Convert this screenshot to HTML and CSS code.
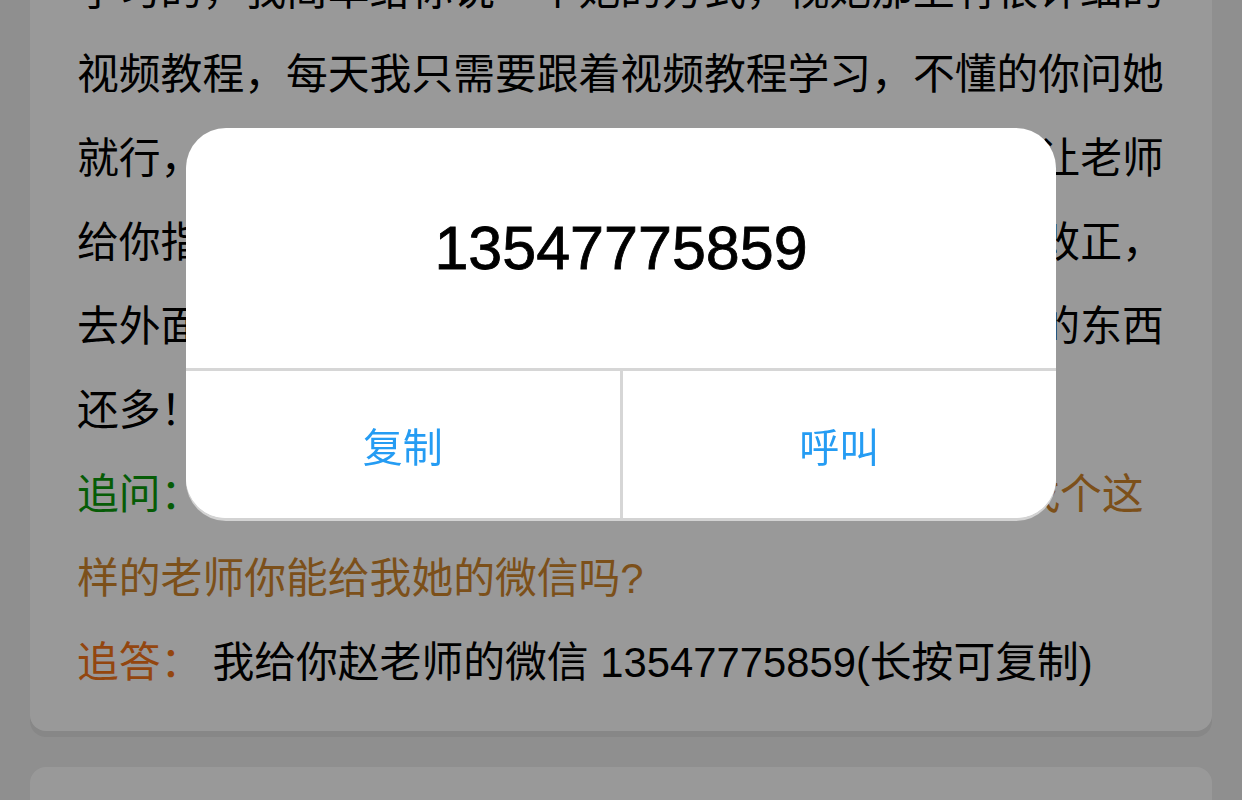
FILE: index.html
```html
<!DOCTYPE html>
<html lang="zh-CN">
<head>
  <meta charset="UTF-8">
  <meta name="viewport" content="width=device-width, initial-scale=1.0">
  <title>问答详情</title>
  <link rel="stylesheet" href="styles.css">
</head>
<body>
  <div class="page">
    <div class="card">
      <p class="answer">学习的，我简单给你说一个她的方式，视她那上有很详细的视频教程，每天我只需要跟着视频教程学习，不懂的你问她就行，她会很耐心的给你讲解，不会的也都可以直接让老师给你指导，哪里不对的地方老师都会帮你指出来让你改正，去外面报班花了好几千块钱学到的都没有在这里学到的东西还多！</p>
      <p class="ask"><span class="ask-label">追问：</span><span class="ask-text">谢谢你的回答,我也非常想学这个，我也想要找个这样的老师你能给我她的微信吗?</span></p>
      <p class="reply"><span class="reply-label">追答：</span><span class="reply-text">我给你赵老师的微信 13547775859(长按可复制)</span></p>
    </div>
    <div class="card"></div>
  </div>

  <div class="mask">
    <div class="dialog">
      <div class="dialog-number">13547775859</div>
      <div class="dialog-actions">
        <button class="dialog-btn" type="button">复制</button>
        <button class="dialog-btn" type="button">呼叫</button>
      </div>
    </div>
  </div>
</body>
</html>
```

FILE: styles.css
```css
body {
  margin: 0;
  font-family: "Liberation Sans", "Noto Sans CJK SC", sans-serif;
  background: #eeeeee;
  color: #000;
  overflow: hidden;
}
.page {
  margin-top: -71px;
  padding: 0 30px;
}
.card {
  background: #fff;
  border-radius: 16px;
  box-shadow: 0 6px 0 #e1e1e1;
  padding: 20px 45px 26px 47px;
  margin-bottom: 36px;
  font-size: 41.8px;
  line-height: 84px;
  min-height: 200px;
}
.card p {
  margin: 0;
}
.ask-label {
  color: #0a9a0a;
}
.ask-text {
  color: #cf852c;
  margin-left: 10px;
}
.reply-label {
  color: #f57519;
}
.reply-text {
  margin-left: 10px;
}

/* 弹窗 */
.mask {
  position: fixed;
  inset: 0;
  background: rgba(0, 0, 0, 0.4);
  display: flex;
  justify-content: center;
  align-items: flex-start;
  padding-top: 128px;
}
.dialog {
  width: 870px;
  background: #fff;
  border-radius: 40px;
  box-shadow: 0 3px 0 #d3d3d3;
  overflow: hidden;
}
.dialog-number {
  height: 240px;
  display: flex;
  align-items: center;
  justify-content: center;
  font-family: "Liberation Sans", Arial, sans-serif;
  font-size: 61px;
  color: #000;
  -webkit-text-stroke: 0.8px #000;
  border-bottom: 3px solid #d6d6d6;
}
.dialog-actions {
  display: flex;
  height: 147px;
}
.dialog-btn {
  flex: 1;
  border: none;
  background: #fff;
  padding: 0;
  font-family: "Noto Sans CJK SC", sans-serif;
  font-size: 40px;
  color: #259cf3;
  cursor: pointer;
}
.dialog-btn + .dialog-btn {
  border-left: 3px solid #d6d6d6;
}
```
